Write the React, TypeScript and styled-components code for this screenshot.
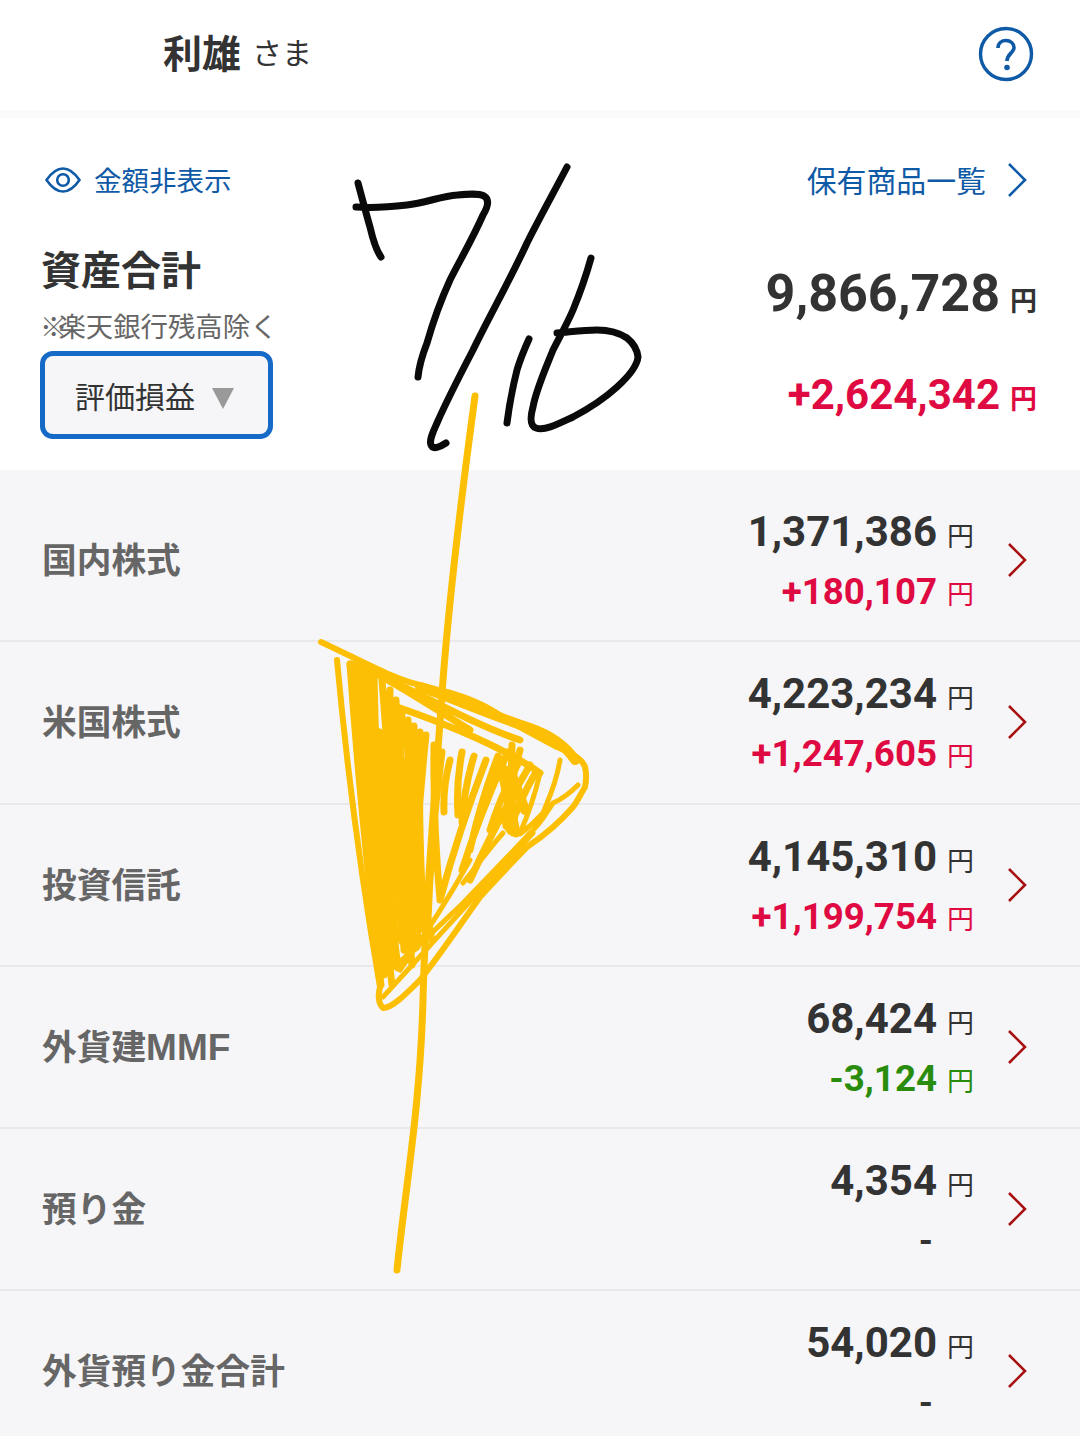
import React from 'react';
import styled, { createGlobalStyle } from 'styled-components';

const GlobalStyle = createGlobalStyle`
    html, body {
        margin: 0;
        padding: 0;
        background: #f6f6f9;
    }
    body {
        font-family: Roboto, "Noto Sans CJK JP", sans-serif;
    }
`;

const COLORS = {
    ink: '#333333',
    gray: '#666666',
    blue: '#0f5aa6',
    red: '#df0a42',
    green: '#2a8c0c',
    chevron: '#a81010',
    line: '#e9e9ec',
};

const CJK = '"Noto Sans CJK JP", "Noto Sans CJK SC", sans-serif';

const Page = styled.div`
    position: relative;
    width: 1080px;
    height: 1436px;
    overflow: hidden;
    background: #f6f6f9;
`;

const TopBar = styled.header`
    height: 118px;
    box-sizing: border-box;
    padding: 0 46px 0 163px;
    display: flex;
    align-items: center;
    justify-content: space-between;
    background: #ffffff;
    border-bottom: 8px solid #fafafa;
`;

const Greeting = styled.div`
    display: flex;
    align-items: center;
    gap: 11px;
    margin-top: -8px;
    font-family: ${CJK};
    color: ${COLORS.ink};
`;

const Name = styled.span`
    font-size: 39px;
    font-weight: 700;
`;

const Honorific = styled.span`
    font-size: 30px;
    font-weight: 400;
`;

const HelpIcon = styled.svg`
    display: block;
    margin-top: -2px;
`;

const Summary = styled.section`
    height: 352px;
    box-sizing: border-box;
    padding: 40px 44px 30px 40px;
    display: flex;
    flex-direction: column;
    background: #ffffff;
`;

const LinkRow = styled.div`
    display: flex;
    align-items: center;
    justify-content: space-between;
    height: 44px;
    padding: 0 9px 0 5px;
`;

const LinkText = styled.span<{ $size: number }>`
    font-family: ${CJK};
    font-size: ${(p) => p.$size}px;
    color: ${COLORS.blue};
    margin-top: -3px;
`;

const HideToggle = styled.div`
    display: flex;
    align-items: center;
    gap: 13px;
`;

const HoldingsLink = styled.div`
    display: flex;
    align-items: center;
    gap: 21px;
`;

const TotalsRow = styled.div`
    flex: 1;
    display: flex;
    justify-content: space-between;
`;

const TotalsLeft = styled.div`
    display: flex;
    flex-direction: column;
    align-items: flex-start;
    padding-top: 38px;
`;

const TotalTitle = styled.div`
    font-family: ${CJK};
    font-size: 40px;
    line-height: 56px;
    font-weight: 700;
    color: ${COLORS.ink};
    margin-left: 1px;
`;

const Note = styled.div`
    font-family: ${CJK};
    font-size: 27.4px;
    line-height: 38px;
    color: ${COLORS.gray};
    margin-top: 10px;
`;

const NoteMark = styled.span`
    font-weight: 700;
    letter-spacing: -9px;
`;

const Dropdown = styled.div`
    width: 233px;
    height: 88px;
    box-sizing: border-box;
    margin-top: 7px;
    padding-left: 30px;
    display: flex;
    align-items: center;
    gap: 17px;
    background: #f6f6f8;
    border: 5px solid #1569c7;
    border-radius: 13px;
    font-family: ${CJK};
    font-size: 30px;
    color: ${COLORS.ink};
`;

const Caret = styled.span`
    width: 0;
    height: 0;
    border-left: 11px solid transparent;
    border-right: 11px solid transparent;
    border-top: 21px solid #999999;
    margin-top: 6px;
`;

const TotalsRight = styled.div`
    display: flex;
    flex-direction: column;
    align-items: flex-end;
    padding-top: 61px;
    gap: 44px;
    margin-right: -1px;
`;

const AmountLine = styled.div<{ $color: string; $size: number }>`
    display: flex;
    align-items: baseline;
    gap: 10px;
    color: ${(p) => p.$color};
    font-size: ${(p) => p.$size}px;
    line-height: ${(p) => p.$size + 10}px;
    font-weight: 700;
`;

const BoldYen = styled.span`
    font-family: ${CJK};
    font-size: 27px;
    font-weight: 700;
    line-height: 1;
`;

const AssetList = styled.div`
    padding-top: 10px;
`;

const Row = styled.div`
    height: 162.25px;
    box-sizing: border-box;
    padding: 0 53px 0 42px;
    display: flex;
    align-items: center;
    justify-content: space-between;
    border-bottom: 2px solid ${COLORS.line};
`;

const RowLabel = styled.div`
    font-family: ${CJK};
    font-size: 34.7px;
    font-weight: 700;
    color: ${COLORS.gray};
    padding-bottom: 4px;
`;

const LatinLabel = styled.span`
    font-family: "Liberation Sans", sans-serif;
    font-size: 37px;
`;

const RowRight = styled.div`
    display: flex;
    align-items: center;
    gap: 33px;
`;

const Values = styled.div`
    display: flex;
    flex-direction: column;
    align-items: flex-end;
    gap: 12px;
    padding-top: 4px;
`;

const ValueLine = styled.div<{ $color: string; $size: number }>`
    display: flex;
    align-items: baseline;
    gap: 10px;
    color: ${(p) => p.$color};
    font-size: ${(p) => p.$size}px;
    line-height: 48px;
    font-weight: 700;
`;

const Yen = styled.span`
    font-family: ${CJK};
    font-size: 27px;
    font-weight: 400;
    line-height: 1;
    width: 27px;
`;

const EmptyValue = styled.div`
    font-size: 36px;
    line-height: 48px;
    font-weight: 700;
    color: ${COLORS.ink};
    margin-right: 41px;
`;

const Annotation = styled.svg`
    position: absolute;
    left: 0;
    top: 0;
    pointer-events: none;
`;

const Chevron: React.FC<{ color: string }> = ({ color }) => (
    <svg width="20" height="36" viewBox="0 0 20 36" fill="none">
        <path d="M2 2 L18 18 L2 34" stroke={color} strokeWidth="2.6" />
    </svg>
);

interface Asset {
    name: React.ReactNode;
    value: string;
    change?: string;
    color?: string;
}

const ASSETS: Asset[] = [
    { name: '国内株式', value: '1,371,386', change: '+180,107', color: COLORS.red },
    { name: '米国株式', value: '4,223,234', change: '+1,247,605', color: COLORS.red },
    { name: '投資信託', value: '4,145,310', change: '+1,199,754', color: COLORS.red },
    {
        name: (
            <>
                外貨建<LatinLabel>MMF</LatinLabel>
            </>
        ),
        value: '68,424',
        change: '-3,124',
        color: COLORS.green,
    },
    { name: '預り金', value: '4,354' },
    { name: '外貨預り金合計', value: '54,020' },
];

// fan of scribbled strokes: [top x, top y, bottom x, bottom y]
const SCRIBBLE: number[][] = [
    [350, 664, 381, 985], [356, 664, 384, 975], [362, 668, 392, 985], [368, 672, 398, 968],
    [374, 676, 388, 960], [382, 680, 410, 960], [390, 690, 396, 965], [396, 700, 412, 965],
    [402, 712, 404, 950], [408, 720, 418, 940], [414, 726, 408, 955], [420, 732, 424, 930],
    [426, 735, 412, 945], [434, 745, 440, 900], [442, 752, 428, 920], [402, 760, 432, 940],
    [386, 720, 400, 840], [450, 760, 444, 812], [462, 752, 458, 815], [474, 756, 462, 822],
    [486, 760, 440, 900], [498, 756, 470, 850], [508, 752, 462, 870], [520, 760, 490, 830],
    [530, 765, 470, 880], [536, 772, 510, 830], [520, 750, 506, 826], [512, 745, 516, 834],
];

const scribblePath = SCRIBBLE.map(
    ([x1, y1, x2, y2]) => `M${x1} ${y1} Q${(x1 + x2) / 2 - 4} ${(y1 + y2) / 2} ${x2} ${y2}`,
).join(' ');

const App: React.FC = () => (
    <Page>
        <GlobalStyle />
        <TopBar>
            <Greeting>
                <Name>利雄</Name>
                <Honorific>さま</Honorific>
            </Greeting>
            <HelpIcon width="56" height="56" viewBox="0 0 56 56" fill="none">
                <circle cx="28" cy="28" r="25.5" stroke={COLORS.blue} strokeWidth="3.4" />
                <path
                    d="M20 22 C20 17 24 14.5 28 14.5 C32.5 14.5 36 17.5 36 21.5 C36 27 29 27.5 29 35"
                    stroke={COLORS.blue}
                    strokeWidth="3.6"
                />
                <circle cx="29" cy="41.5" r="2.8" fill={COLORS.blue} />
            </HelpIcon>
        </TopBar>
        <Summary>
            <LinkRow>
                <HideToggle>
                    <svg width="36" height="26" viewBox="0 0 36 26" fill="none">
                        <path
                            d="M1.5 13 C7 5 12 1.5 18 1.5 C24 1.5 29 5 34.5 13 C29 21 24 24.5 18 24.5 C12 24.5 7 21 1.5 13 Z"
                            stroke={COLORS.blue}
                            strokeWidth="2.6"
                        />
                        <circle cx="18" cy="13" r="5.8" stroke={COLORS.blue} strokeWidth="2.6" />
                    </svg>
                    <LinkText $size={27.5}>金額非表示</LinkText>
                </HideToggle>
                <HoldingsLink>
                    <LinkText $size={29.9}>保有商品一覧</LinkText>
                    <Chevron color={COLORS.blue} />
                </HoldingsLink>
            </LinkRow>
            <TotalsRow>
                <TotalsLeft>
                    <TotalTitle>資産合計</TotalTitle>
                    <Note>
                        <NoteMark>※</NoteMark>楽天銀行残高除く
                    </Note>
                    <Dropdown>
                        評価損益
                        <Caret />
                    </Dropdown>
                </TotalsLeft>
                <TotalsRight>
                    <AmountLine $color={COLORS.ink} $size={52}>
                        9,866,728<BoldYen>円</BoldYen>
                    </AmountLine>
                    <AmountLine $color={COLORS.red} $size={42}>
                        +2,624,342<BoldYen>円</BoldYen>
                    </AmountLine>
                </TotalsRight>
            </TotalsRow>
        </Summary>
        <AssetList>
            {ASSETS.map((asset) => (
                <Row key={asset.value}>
                    <RowLabel>{asset.name}</RowLabel>
                    <RowRight>
                        <Values>
                            <ValueLine $color={COLORS.ink} $size={42}>
                                {asset.value}
                                <Yen>円</Yen>
                            </ValueLine>
                            {asset.change ? (
                                <ValueLine $color={asset.color ?? COLORS.ink} $size={36.7}>
                                    {asset.change}
                                    <Yen>円</Yen>
                                </ValueLine>
                            ) : (
                                <EmptyValue>-</EmptyValue>
                            )}
                        </Values>
                        <Chevron color={COLORS.chevron} />
                    </RowRight>
                </Row>
            ))}
        </AssetList>
        <Annotation width="1080" height="1436" viewBox="0 0 1080 1436" fill="none" strokeLinecap="round" strokeLinejoin="round">
            <g stroke="#0a0a0a" strokeWidth="7">
                <path d="M356 207 C372 208 390 207 407 205 C425 203 442 196 457 195 C468 194 478 193 484 196 C489 199 489 205 483 215 C472 240 460 260 450 280 C440 302 433 322 427 343 C422 356 419 366 418 377" />
                <path d="M358 183 C362 198 366 213 370 227 C373 240 376 250 381 257" />
                <path d="M567 167 C554 192 540 217 527 243 C510 280 490 315 473 350 C460 375 447 400 437 423 C433 432 429 440 431 445 C433 450 440 447 446 443" />
                <path d="M529 339 C524 350 520 360 517 370 C512 390 509 407 507 423" />
                <path d="M591 258 C586 276 580 293 573 310 C567 324 560 336 553 350 C545 370 536 390 533 407 C530 418 530 426 536 428 C545 431 558 424 573 417 C590 408 605 398 617 387 C628 377 637 367 638 357 C637 348 632 342 627 338 C618 332 608 330 597 330 C583 330 570 332 557 333" />
            </g>
            <g stroke="#fcbf04">
                <path d="M475 396 C465 470 450 590 443 680 C437 770 425 900 423 1000 C420 1110 405 1190 397 1270" strokeWidth="7" />
                <path d="M321 642 C360 660 395 680 420 685 C435 689 445 692 447 692 C475 700 490 708 507 720 C525 730 540 738 557 747 C570 752 582 758 585 767 C587 775 586 782 585 787 C580 795 577 802 573 807 C560 822 545 835 527 847 C510 865 495 880 480 897 C460 925 440 955 420 980 C405 995 392 1008 383 1008 C378 1003 378 995 380 987 C365 900 348 780 337 660" strokeWidth="6" />
                <path d="M420 687 C445 695 490 715 530 728 C550 735 565 745 575 760" strokeWidth="10" />
                <path d={scribblePath} strokeWidth="7" />
                <path d="M395 725 L405 940 M378 735 L390 950 M412 740 L414 945 M366 720 L380 930" strokeWidth="14" />
                <path d="M352 664 C380 672 420 700 470 730 M350 664 C400 680 460 720 520 740 M400 708 C440 722 500 745 540 773" strokeWidth="7" />
                <path d="M500 760 L515 830 M510 770 L525 810" strokeWidth="10" />
                <path d="M540 773 C535 795 528 815 520 833 C512 838 506 830 503 818 M560 760 C556 785 548 800 543 813 C535 822 528 828 520 834 M578 785 C568 795 560 800 553 803 C545 815 540 825 530 833 C505 860 480 885 463 903 C440 925 415 950 390 970 M533 833 C490 880 430 945 383 997 M503 833 C488 850 475 868 463 883 M470 860 C445 905 425 935 400 970" strokeWidth="5" />
            </g>
        </Annotation>
    </Page>
);

export default App;
